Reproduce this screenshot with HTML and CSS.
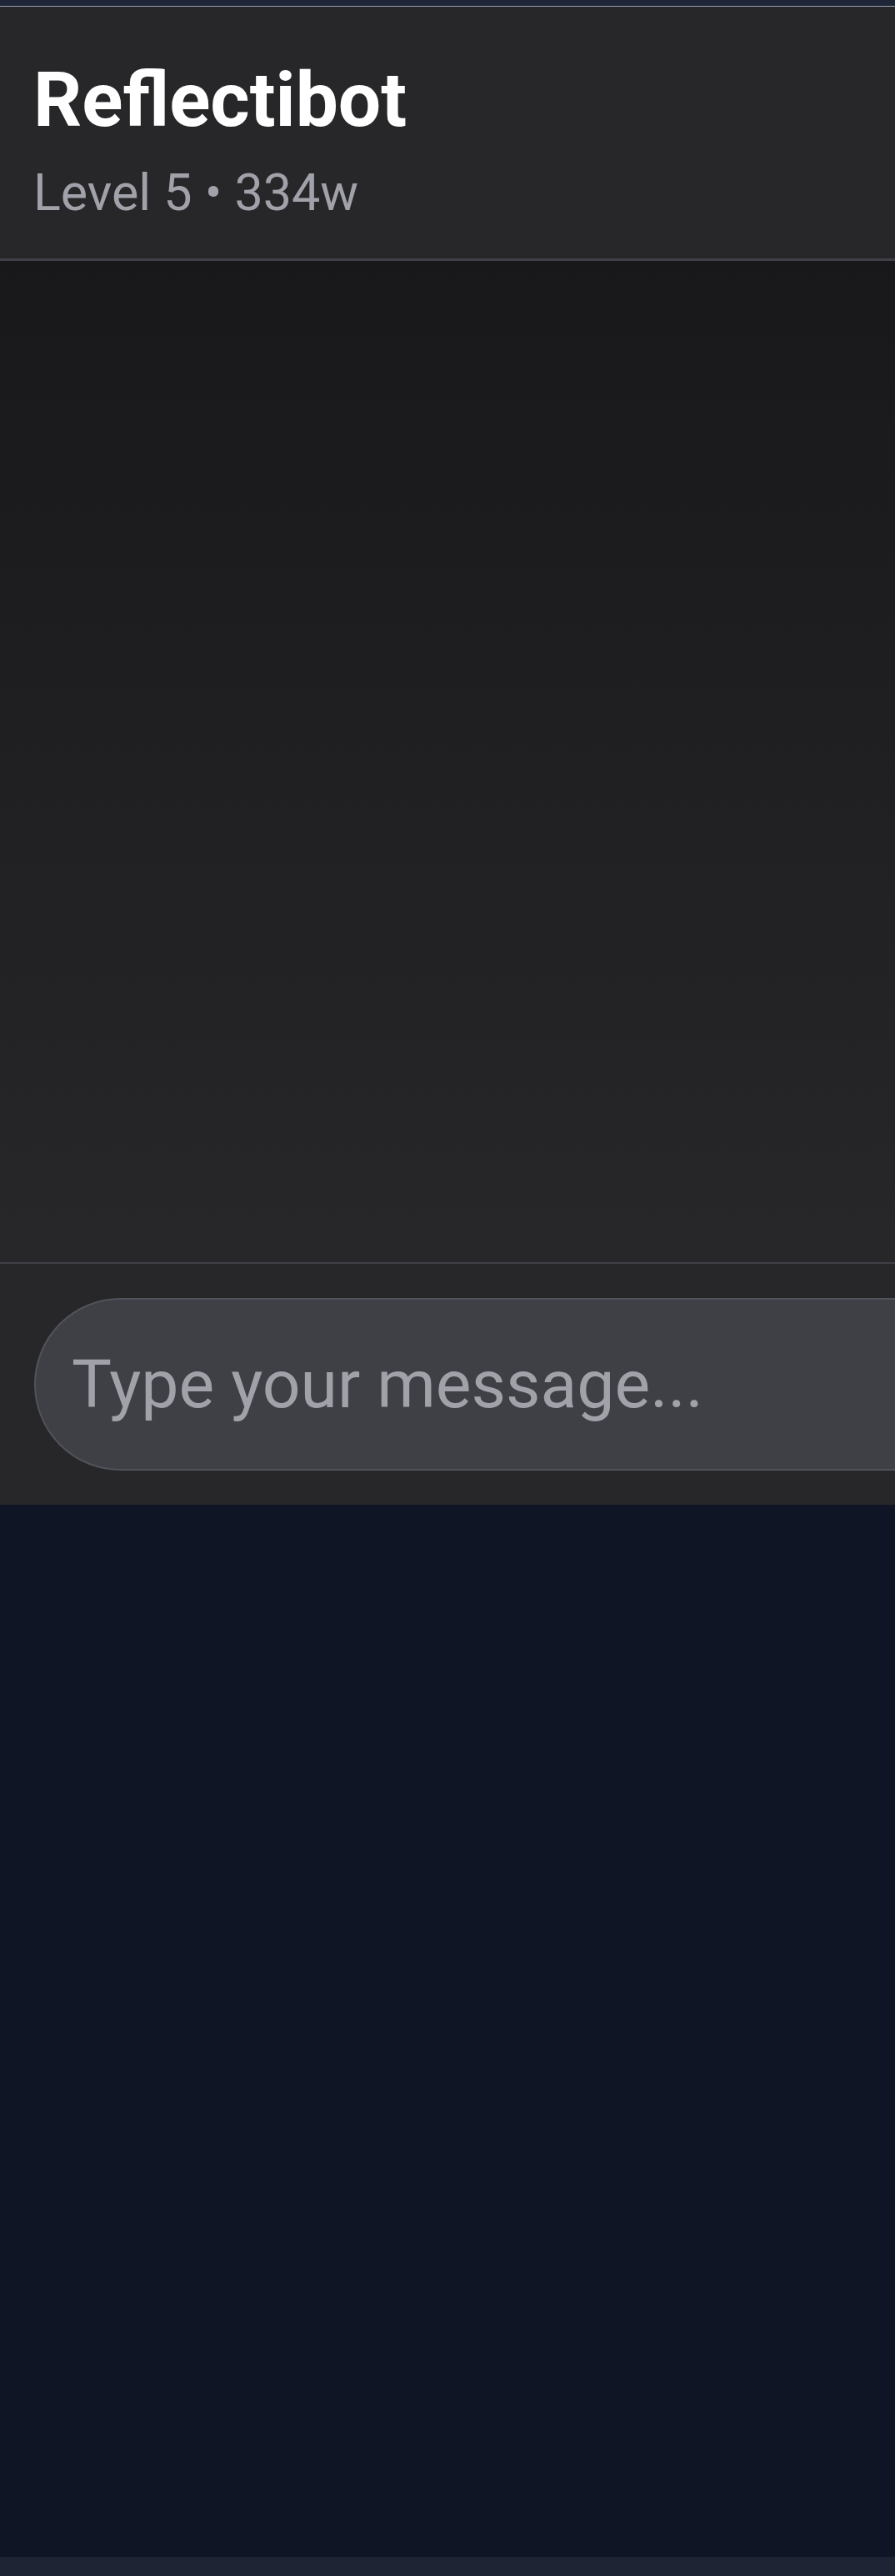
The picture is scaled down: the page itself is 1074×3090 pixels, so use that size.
FILE: index.html
```html
<!DOCTYPE html>
<html lang="en">
<head>
<meta charset="utf-8">
<title>Reflectibot</title>
<link rel="stylesheet" href="styles.css">
</head>
<body>
<div class="app">
  <div class="topbar"></div>
  <header class="header">
    <h1 class="title">Reflectibot</h1>
    <div class="subtitle">Level 5 • 334w</div>
  </header>
  <main class="chat"></main>
  <div class="composer">
    <input class="message" type="text" placeholder="Type your message...">
  </div>
  <div class="rest"></div>
  <div class="footer-band"></div>
</div>
</body>
</html>
```
FILE: styles.css
```css
html, body {
  margin: 0;
  padding: 0;
  background: #0f1524;
}
body {
  font-family: Roboto, "Noto Sans", "Liberation Sans", sans-serif;
  width: 1074px;
  height: 3090px;
  overflow: hidden;
}
.app {
  display: flex;
  flex-direction: column;
  height: 3090px;
}
.topbar {
  height: 7px;
  background: #1d2536;
  border-bottom: 1px solid #9ca3b3;
  flex: none;
}
.header {
  flex: none;
  height: 305px;
  box-sizing: border-box;
  padding: 62px 40px 0 40px;
  background: #27272a;
  border-bottom: 3px solid #3f3f46;
}
.title {
  margin: 0;
  font-size: 91px;
  line-height: 100px;
  font-weight: 700;
  color: #ffffff;
}
.subtitle {
  margin-top: 26px;
  font-size: 61px;
  line-height: 70px;
  color: #a1a1aa;
}
.chat {
  flex: none;
  height: 1201px;
  background: linear-gradient(#18181b, #27272a);
}
.composer {
  flex: none;
  box-sizing: border-box;
  height: 291px;
  padding: 41px 0 41px 41px;
  background: #27272a;
  border-top: 2px solid #3f3f46;
  overflow: hidden;
}
.message {
  display: block;
  box-sizing: border-box;
  width: 1300px;
  height: 207px;
  margin: 0;
  padding: 0 0 0 43px;
  border: 2px solid #52525b;
  border-radius: 104px;
  background: #3f3f46;
  color: #ffffff;
  font-family: Roboto, "Noto Sans", "Liberation Sans", sans-serif;
  font-size: 80.5px;
  outline: none;
}
.message::placeholder {
  color: #a1a1aa;
  opacity: 1;
}
.rest {
  flex: 1;
  background: #0f1524;
}
.footer-band {
  flex: none;
  height: 23px;
  background: #1e2433;
}
```
